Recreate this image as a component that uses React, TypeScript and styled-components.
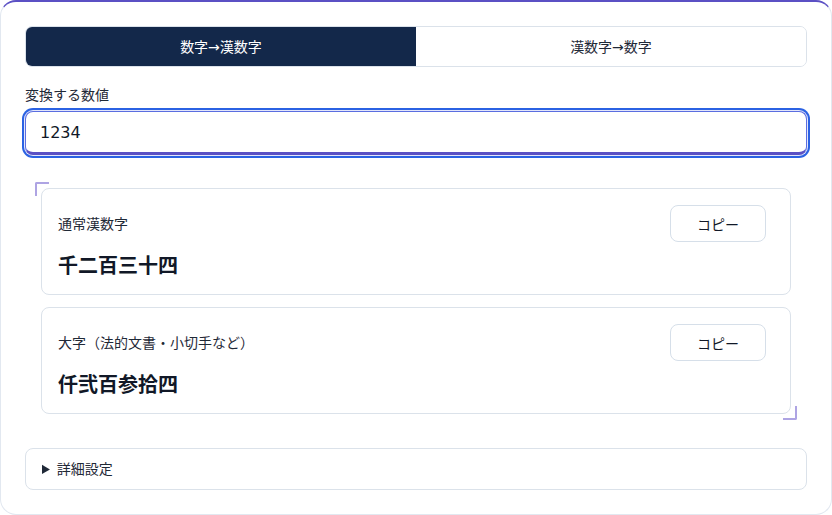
import React, { useState } from 'react'
import styled, { createGlobalStyle } from 'styled-components'

// ------------------------------------------------ style
const GlobalStyle = createGlobalStyle`
  html, body {
    margin: 0;
    padding: 0;
    background: #ffffff;
  }
  body {
    font-family: "DejaVu Sans", "Noto Sans CJK JP", sans-serif;
    color: #1e293b;
  }
  * {
    box-sizing: border-box;
  }
`

const Panel = styled.div`
  width: 832px;
  height: 515px;
  background: #ffffff;
  border: 1px solid #e2e8f0;
  border-top: 2px solid #5b50c4;
  border-radius: 16px;
  padding: 24px;
  display: flex;
  flex-direction: column;
`

const Tabs = styled.div`
  display: flex;
  border: 1px solid #dbe2ea;
  border-radius: 7px;
  overflow: hidden;
  height: 41px;
`

const Tab = styled.button<{ $active: boolean }>`
  flex: 1;
  border: none;
  margin: 0;
  font-family: inherit;
  font-size: 14px;
  line-height: 20px;
  cursor: pointer;
  background: ${(p) => (p.$active ? '#13284a' : '#ffffff')};
  color: ${(p) => (p.$active ? '#ffffff' : '#1f2937')};
`

const Label = styled.label`
  display: block;
  margin-top: 18px;
  font-size: 14px;
  line-height: 20px;
  color: #1f2937;
`

const NumberInput = styled.input`
  display: block;
  width: 100%;
  height: 44px;
  margin-top: 6px;
  padding: 1px 14px 0;
  font-family: inherit;
  font-size: 16px;
  color: #111827;
  background: #ffffff;
  border: 1px solid #5b6ee0;
  border-bottom: 3px solid #5b50c4;
  border-radius: 8px;
  outline: none;
  box-shadow: 0 0 0 1px #e3e6fb, 0 0 0 3px #2b62e3;
`

const Results = styled.div`
  position: relative;
  margin: 27px 10px 0;
  padding: 6px;
  display: flex;
  flex-direction: column;
  gap: 12px;

  &::before,
  &::after {
    content: '';
    position: absolute;
    width: 12px;
    height: 12px;
    border: 0 solid #aea4e3;
  }
  &::before {
    top: 0;
    left: 0;
    border-top-width: 2px;
    border-left-width: 2px;
    border-top-left-radius: 2px;
  }
  &::after {
    right: 0;
    bottom: 0;
    border-right-width: 2px;
    border-bottom-width: 2px;
    border-bottom-right-radius: 2px;
  }
`

const ResultCard = styled.div`
  border: 1px solid #dbe2ea;
  border-radius: 8px;
  padding: 16px 24px 16px 16px;
  background: #ffffff;
`

const ResultHead = styled.div`
  display: flex;
  align-items: center;
  justify-content: space-between;
`

const ResultLabel = styled.span`
  font-size: 14px;
  line-height: 20px;
  color: #1f2937;
`

const CopyButton = styled.button`
  height: 37px;
  padding: 0 26px;
  font-family: inherit;
  font-size: 14px;
  color: #111827;
  background: #ffffff;
  border: 1px solid #d6dfe9;
  border-radius: 8px;
  cursor: pointer;
`

const ResultValue = styled.div`
  margin-top: 12px;
  font-size: 20px;
  line-height: 24px;
  font-weight: 700;
  color: #111827;
`

const Details = styled.details`
  margin-top: 28px;
  border: 1px solid #dbe2ea;
  border-radius: 8px;
  padding: 10px 16px;
`

const Summary = styled.summary`
  font-size: 14px;
  line-height: 20px;
  color: #1f2937;
  cursor: pointer;
`

// ------------------------------------------------ data
const results = [
  { label: '通常漢数字', value: '千二百三十四' },
  { label: '大字（法的文書・小切手など）', value: '仟弐百参拾四' }
]

// ------------------------------------------------ comp
export default function App() {
  const [mode, setMode] = useState<'toKanji' | 'toNumber'>('toKanji')
  const [value, setValue] = useState<string>('1234')

  return (
    <>
      <GlobalStyle />
      <Panel>
        <Tabs>
          <Tab $active={mode === 'toKanji'} onClick={() => setMode('toKanji')}>
            数字→漢数字
          </Tab>
          <Tab $active={mode === 'toNumber'} onClick={() => setMode('toNumber')}>
            漢数字→数字
          </Tab>
        </Tabs>
        <Label htmlFor="num">変換する数値</Label>
        <NumberInput id="num" value={value} onChange={(e) => setValue(e.target.value)} />
        <Results>
          {results.map((r) => (
            <ResultCard key={r.label}>
              <ResultHead>
                <ResultLabel>{r.label}</ResultLabel>
                <CopyButton>コピー</CopyButton>
              </ResultHead>
              <ResultValue>{r.value}</ResultValue>
            </ResultCard>
          ))}
        </Results>
        <Details>
          <Summary>詳細設定</Summary>
        </Details>
      </Panel>
    </>
  )
}
